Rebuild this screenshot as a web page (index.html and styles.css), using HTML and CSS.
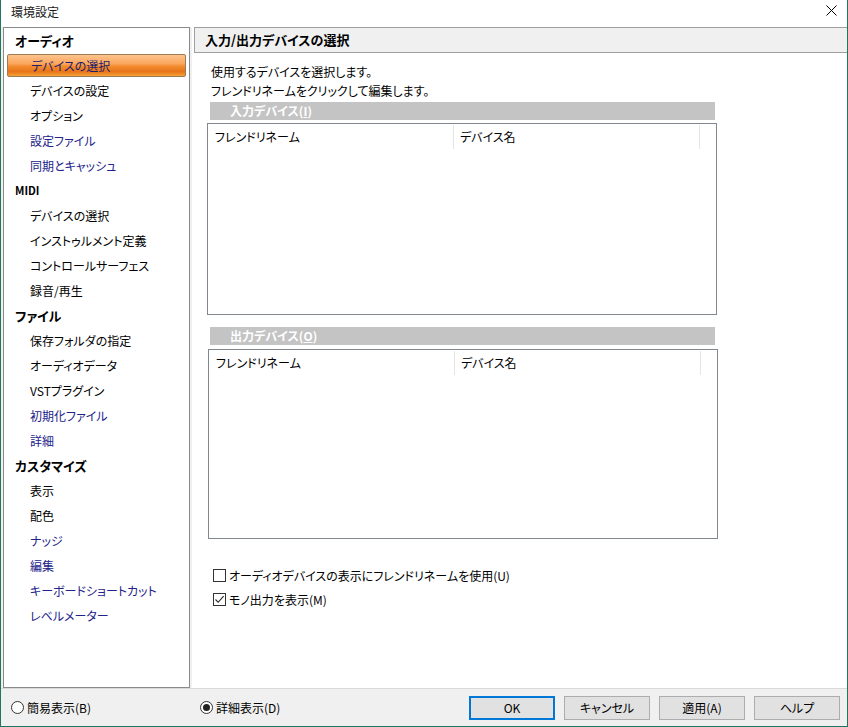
FILE: index.html
```html
<!DOCTYPE html>
<html lang="ja">
<head>
<meta charset="utf-8">
<title>環境設定</title>
<link rel="stylesheet" href="styles.css">
</head>
<body>
<div class="window">
  <div class="titlebar">
    <span class="title">環境設定</span>
    <svg class="close" width="11" height="11" viewBox="0 0 11 11"><path d="M0.5 0.5 L10.5 10.5 M10.5 0.5 L0.5 10.5" stroke="#000" stroke-width="1" fill="none"/></svg>
  </div>
  <div class="main">
    <nav class="sidebar">
      <div class="group">オーディオ</div>
      <div class="item selected">デバイスの選択</div>
      <div class="item">デバイスの設定</div>
      <div class="item">オプション</div>
      <div class="item blue">設定ファイル</div>
      <div class="item blue">同期とキャッシュ</div>
      <div class="group latin">MIDI</div>
      <div class="item">デバイスの選択</div>
      <div class="item">インストゥルメント定義</div>
      <div class="item">コントロールサーフェス</div>
      <div class="item">録音/再生</div>
      <div class="group">ファイル</div>
      <div class="item">保存フォルダの指定</div>
      <div class="item">オーディオデータ</div>
      <div class="item">VSTプラグイン</div>
      <div class="item blue">初期化ファイル</div>
      <div class="item blue">詳細</div>
      <div class="group">カスタマイズ</div>
      <div class="item">表示</div>
      <div class="item">配色</div>
      <div class="item blue">ナッジ</div>
      <div class="item blue">編集</div>
      <div class="item blue">キーボードショートカット</div>
      <div class="item blue">レベルメーター</div>
    </nav>
    <section class="panel">
      <div class="panel-header">入力/出力デバイスの選択</div>
      <div class="panel-body">
        <p class="desc first">使用するデバイスを選択します。</p>
        <p class="desc">フレンドリネームをクリックして編集します。</p>
        <div class="section-bar">入力デバイス(<u>I</u>)</div>
        <div class="listbox input-list">
          <div class="list-head">
            <div class="col col-name">フレンドリネーム</div>
            <div class="col col-device">デバイス名</div>
          </div>
        </div>
        <div class="section-bar output-bar">出力デバイス(<u>O</u>)</div>
        <div class="listbox output-list">
          <div class="list-head">
            <div class="col col-name">フレンドリネーム</div>
            <div class="col col-device">デバイス名</div>
          </div>
        </div>
        <div class="checks">
          <label class="check"><span class="box"></span>オーディオデバイスの表示にフレンドリネームを使用(U)</label>
          <label class="check"><span class="box checked"><svg width="11" height="11" viewBox="0 0 11 11"><path d="M1.5 5.5 L4.2 8.3 L9.6 2.2" stroke="#222" stroke-width="1.1" fill="none"/></svg></span>モノ出力を表示(M)</label>
        </div>
      </div>
    </section>
  </div>
  <div class="bottombar">
    <label class="radio radio-simple"><span class="circle"></span>簡易表示(B)</label>
    <label class="radio"><span class="circle on"></span>詳細表示(D)</label>
    <div class="buttons">
      <button class="btn default">OK</button>
      <button class="btn">キャンセル</button>
      <button class="btn">適用(A)</button>
      <button class="btn">ヘルプ</button>
    </div>
  </div>
</div>
</body>
</html>
```
FILE: styles.css
```css
html, body {
  margin: 0;
  padding: 0;
  background: #ffffff;
}
body {
  font-family: "Noto Sans CJK JP", "Noto Sans", sans-serif;
  font-size: 12px;
  color: #000;
  font-feature-settings: "palt";
}
.window {
  width: 848px;
  height: 727px;
  box-sizing: border-box;
  border-left: 1px solid #1f7560;
  border-right: 1px solid #1f7560;
  border-bottom: 1px solid #1f7560;
  display: flex;
  flex-direction: column;
  overflow: hidden;
  background: #f0f0f0;
}
.titlebar {
  height: 27px;
  flex: none;
  background: #fff;
  display: flex;
  align-items: center;
  justify-content: space-between;
  padding: 0 10px 0 10px;
  box-sizing: border-box;
}
.title {
  font-size: 12px;
  color: #1a1a1a;
  line-height: 27px;
  margin-top: -5px;
}
.close {
  margin-top: -6px;
}
.main {
  height: 661px;
  flex: none;
  display: flex;
  gap: 2px;
  padding-left: 2px;
  background: #f0f0f0;
}
.sidebar {
  width: 187px;
  flex: none;
  box-sizing: border-box;
  border: 1px solid #8a8a8a;
  background: #fff;
  padding-top: 0;
}
.group {
  height: 25px;
  line-height: 25px;
  padding-left: 11px;
  font-weight: bold;
  font-size: 13px;
}
.group.latin {
  font-size: 11px;
}
.item {
  height: 25px;
  line-height: 25px;
  margin: 0 3px;
  padding-left: 23px;
  box-sizing: border-box;
  white-space: nowrap;
}
.item.blue {
  color: #22228a;
}
.item.selected {
  height: 23px;
  line-height: 21px;
  margin: 1px 3px;
  border: 1px solid #9b7d55;
  border-radius: 2px;
  color: #1c1c6e;
  background: linear-gradient(to bottom, #fdc38c 0%, #fba860 40%, #f08a2c 55%, #e8741a 80%, #f7a238 100%);
}
.panel {
  flex: 1;
  background: #fff;
  display: flex;
  flex-direction: column;
}
.panel-header {
  height: 26px;
  box-sizing: border-box;
  margin-left: 2px;
  border-top: 1px solid #a0a0a0;
  border-bottom: 1px solid #a0a0a0;
  border-left: 1px solid #a0a0a0;
  background: #f0f0f0;
  padding-left: 10px;
  font-weight: bold;
  font-size: 13px;
  line-height: 24px;
}
.panel-body {
  padding-left: 15px;
}
.desc {
  margin: 0;
  padding-left: 4px;
  line-height: 19px;
  height: 19px;
}
.desc.first {
  margin-top: 9px;
}
.section-bar {
  margin-top: 2px;
  margin-left: 3px;
  width: 505px;
  height: 18px;
  line-height: 18px;
  background: #c4c4c4;
  color: #fff;
  font-weight: bold;
  padding-left: 20px;
  box-sizing: border-box;
}
.section-bar.output-bar {
  margin-top: 12px;
}
.listbox {
  margin-top: 3px;
  width: 510px;
  box-sizing: border-box;
  border: 1px solid #828790;
  background: #fff;
}
.input-list {
  height: 192px;
}
.output-list {
  margin-top: 4px;
  margin-left: 1px;
  height: 190px;
}
.list-head {
  display: flex;
  height: 24px;
  margin-top: 1px;
}
.col {
  box-sizing: border-box;
  border-right: 1px solid #e5e5e5;
  line-height: 23px;
}
.col-name {
  width: 246px;
  padding-left: 7px;
}
.col-device {
  width: 246px;
  padding-left: 6px;
}
.checks {
  margin-top: 24px;
  padding-left: 6px;
}
.check {
  display: flex;
  align-items: center;
  height: 24px;
  gap: 3px;
}
.box {
  width: 13px;
  height: 13px;
  box-sizing: border-box;
  border: 1px solid #333;
  background: #fff;
  display: flex;
  align-items: center;
  justify-content: center;
  flex: none;
}
.bottombar {
  height: 38px;
  flex: none;
  display: flex;
  align-items: center;
  padding: 0 7px 0 10px;
  border-top: 1px solid #dadada;
  box-sizing: border-box;
}
.radio {
  display: flex;
  align-items: center;
  gap: 3px;
}
.radio-simple {
  width: 189px;
}
.circle {
  width: 13px;
  height: 13px;
  box-sizing: border-box;
  border: 1px solid #333;
  border-radius: 50%;
  background: #fff;
  display: flex;
  align-items: center;
  justify-content: center;
}
.circle.on::after {
  content: "";
  width: 7px;
  height: 7px;
  border-radius: 50%;
  background: #222;
}
.buttons {
  margin-left: auto;
  display: flex;
  gap: 9px;
}
.btn {
  width: 86px;
  height: 24px;
  box-sizing: border-box;
  border: 1px solid #adadad;
  background: #e1e1e1;
  font-family: inherit;
  font-size: 12px;
  color: #000;
  padding: 0;
  font-feature-settings: "palt";
}
.btn.default {
  border: 2px solid #0078d7;
}
```
